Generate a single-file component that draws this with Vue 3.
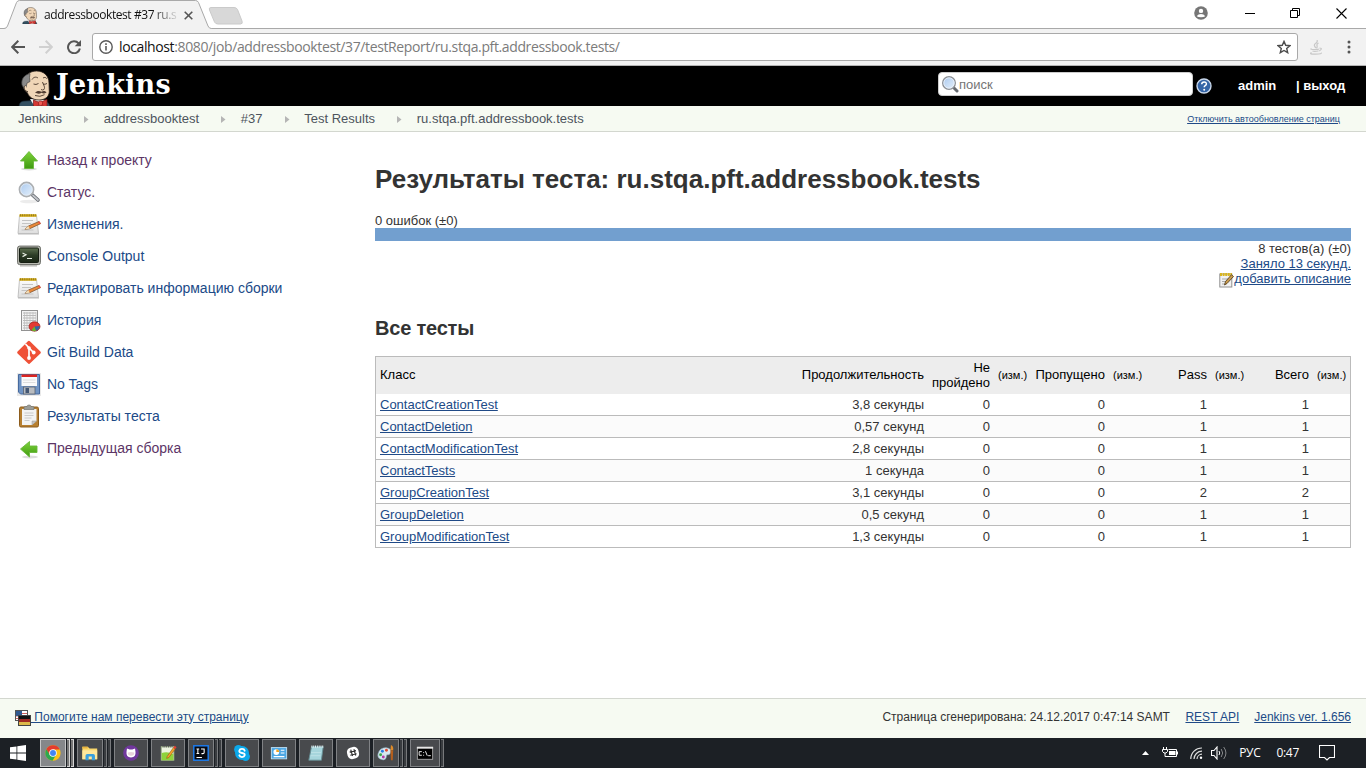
<script setup>
const crumbs = ['Jenkins', 'addressbooktest', '#37', 'Test Results', 'ru.stqa.pft.addressbook.tests']

const tasks = [
  { icon: 'up', label: 'Назад к проекту', visited: true },
  { icon: 'search', label: 'Статус.', visited: true },
  { icon: 'notepad', label: 'Изменения.' },
  { icon: 'terminal', label: 'Console Output' },
  { icon: 'notepad', label: 'Редактировать информацию сборки' },
  { icon: 'graph', label: 'История' },
  { icon: 'git', label: 'Git Build Data' },
  { icon: 'save', label: 'No Tags' },
  { icon: 'clipboard', label: 'Результаты теста' },
  { icon: 'previous', label: 'Предыдущая сборка', visited: true }
]

const rows = [
  { name: 'ContactCreationTest', time: '3,8 секунды', fail: 0, skip: 0, pass: 1, total: 1 },
  { name: 'ContactDeletion', time: '0,57 секунд', fail: 0, skip: 0, pass: 1, total: 1 },
  { name: 'ContactModificationTest', time: '2,8 секунды', fail: 0, skip: 0, pass: 1, total: 1 },
  { name: 'ContactTests', time: '1 секунда', fail: 0, skip: 0, pass: 1, total: 1 },
  { name: 'GroupCreationTest', time: '3,1 секунды', fail: 0, skip: 0, pass: 2, total: 2 },
  { name: 'GroupDeletion', time: '0,5 секунд', fail: 0, skip: 0, pass: 1, total: 1 },
  { name: 'GroupModificationTest', time: '1,3 секунды', fail: 0, skip: 0, pass: 1, total: 1 }
]

const apps = [
  { icon: 'chrome', stack: 2, active: true },
  { icon: 'explorer', stack: 2 },
  { icon: 'github', stack: 0 },
  { icon: 'npp', stack: 0 },
  { icon: 'idea', stack: 2 },
  { icon: 'skype', stack: 0 },
  { icon: 'panel', stack: 0 },
  { icon: 'notes', stack: 0 },
  { icon: 'slack', stack: 0 },
  { icon: 'paint', stack: 2 },
  { icon: 'cmd', stack: 1 }
]
</script>

<template>
  <div class="screen">
    <svg class="defs" width="0" height="0" aria-hidden="true">
      <defs>
        <linearGradient id="green" x1="0" y1="0" x2="0" y2="1">
          <stop offset="0" stop-color="#7ed33a" /><stop offset="1" stop-color="#3f9a12" />
        </linearGradient>
        <linearGradient id="lens" x1="0" y1="0" x2="1" y2="1">
          <stop offset="0" stop-color="#a9c8ee" /><stop offset="1" stop-color="#e6f1fc" />
        </linearGradient>
        <linearGradient id="paper" x1="0" y1="0" x2="0" y2="1">
          <stop offset="0" stop-color="#fdfdfd" /><stop offset="1" stop-color="#dedede" />
        </linearGradient>
        <linearGradient id="crt" x1="0" y1="0" x2="0" y2="1">
          <stop offset="0" stop-color="#5d7050" /><stop offset="0.5" stop-color="#2c3c26" /><stop offset="1" stop-color="#1a2616" />
        </linearGradient>
      </defs>
      <symbol id="i-butler" viewBox="0 0 34 37">
        <path d="M1 37c0-4 2-6 6-6l16-1c5 0 8 2 9 7z" fill="#335061" stroke="#16242c" stroke-width=".7" />
        <path d="M12 29l5 8h8l4-7z" fill="#f4f4f4" />
        <path d="M7 11C7 5 12 1 18.500 1 26 1 31 6 31 13l.3 9c-.5 5-4.500 8-10.300 8-6 0-10-3-11.500-7L7 20.500C5 18 5.500 14 7 11z" fill="#f0d6b7" stroke="#2a201a" stroke-width=".8" />
        <path d="M12 3.500C6 5 3 9 4 15l2.500 4.500 1.500-2 1-4.500 3-1.500-.5-4z" fill="#898989" stroke="#444" stroke-width=".7" />
        <path d="M7.500 15.500c-2 .5-1.700 4 .5 5.500l2 .8" fill="#f0d6b7" stroke="#3a2b20" stroke-width=".9" />
        <path d="M14 9.500c1.500-2.500 4-3 6-1.500M25 8c1.500-1 3-.7 4 .8M15.500 14q2.500 1.200 5-.5M25 14q2 .8 4-.5M24.500 12c.8 3 3 5 1.500 7.500q-1.500 1-3 0M17 25.500q5 2 9.500-.8" fill="none" stroke="#4a382b" stroke-width=".9" />
        <path d="M17 22.500c2-2 4.500-2 6.500-.7 2-1.300 4-.8 5 .7-1.700 1.300-3.500 1.300-5 .3-2 1.300-4.500 1-6.500-.3z" fill="#513d31" />
        <path d="M15.500 30l6 2.500 7.500-3v8l-7-2.500-6.500 2.500z" fill="#d33833" stroke="#7e1512" stroke-width=".7" />
        <rect x="20.500" y="31" width="4" height="4.500" rx="1.500" fill="#ef5b52" stroke="#8a1814" stroke-width=".6" />
      </symbol>
      <symbol id="i-up" viewBox="0 0 24 24">
        <ellipse cx="12" cy="21" rx="8" ry="1.500" fill="#ddd" />
        <path d="M12 3.500l8.500 9.500h-4v7.500h-9V13h-4z" fill="url(#green)" stroke="#69b83a" stroke-width=".9" />
      </symbol>
      <symbol id="i-search" viewBox="0 0 24 24">
        <ellipse cx="12" cy="21.500" rx="9" ry="1.700" fill="#ececec" />
        <path d="M15.500 15l5.500 5" stroke="#666a70" stroke-width="3.600" stroke-linecap="round" />
        <path d="M16 15.500l5 4.500" stroke="#c3c6cb" stroke-width="1.800" stroke-linecap="round" />
        <circle cx="9.500" cy="9.500" r="7" fill="url(#lens)" stroke="#acafb2" stroke-width="1.800" />
        <circle cx="9.500" cy="9.500" r="5.800" fill="none" stroke="#e9f0f8" stroke-width=".8" />
      </symbol>
      <symbol id="i-notepad" viewBox="0 0 24 24">
        <path d="M2.500 3.500h17l2 18h-20.500z" fill="url(#paper)" stroke="#b5b5b5" stroke-width=".8" />
        <path d="M2.500 3.500h17" stroke="#d2aa15" stroke-width="2.600" />
        <path d="M3 3.200h16" stroke="#8c7420" stroke-width="2" stroke-dasharray=".8 1.400" />
        <path d="M5 8.500h11M5 11.500h9M4.500 14.500h6M4.500 18h12" stroke="#c4c4c4" stroke-width="1" />
        <path d="M8 17.300l3.300-3.300L22 9.500l1.500 2.200-10.700 5z" fill="#e9883a" stroke="#744d2a" stroke-width=".7" />
        <path d="M8 17.300l3.300-3.300 1.500 2.700z" fill="#f2dfb9" />
        <path d="M21 9.900l1.500-.7 1.300 2.300-1.300.8z" fill="#ea5245" />
        <path d="M1 22h21" stroke="#bbb" stroke-width="1" />
      </symbol>
      <symbol id="i-terminal" viewBox="0 0 24 24">
        <rect x=".6" y="2.100" width="22.800" height="18.500" rx="2" fill="#b9bbb2" stroke="#696b65" />
        <rect x="2.500" y="4" width="19" height="14.500" rx="1" fill="url(#crt)" stroke="#151d12" />
        <path d="M5.500 9l3.500 1.800-3.500 1.800M10 14.500h5" fill="none" stroke="#e8eee3" stroke-width="1.200" />
        <path d="M3 21.800h17" stroke="#bdbdb9" stroke-width="1.500" />
      </symbol>
      <symbol id="i-graph" viewBox="0 0 24 24">
        <rect x="4.500" y="2.500" width="16" height="20" fill="#f4f4f4" stroke="#929292" />
        <path d="M6 5h13M6 7.500h13M6 10h13M6 12.500h13M6 15h13M6 17.500h11M6 20h8" stroke="#aaa" stroke-width=".8" />
        <path d="M7.500 4v18M10 4v18M13 4v18M16 4v18M19 4v18" stroke="#bbb" stroke-width=".7" />
        <ellipse cx="17.500" cy="18.500" rx="5.500" ry="4.700" fill="#e43b32" stroke="#921d1a" stroke-width=".7" />
        <path d="M17.500 18.500l5.300-.5c0 2.500-1.800 4.200-4 4.800z" fill="#3465a4" />
        <path d="M17.500 18.500l1.500 4.500c-2 .4-3.700-.2-4.500-1z" fill="#69b52f" />
      </symbol>
      <symbol id="i-git" viewBox="0 0 24 24">
        <path d="M10.900 1.300L.6 11.600a1.300 1.300 0 0 0 0 1.800l10.500 10.200a1.300 1.300 0 0 0 1.800 0l10.500-10.200a1.300 1.300 0 0 0 0-1.800L12.900 1.300a1.300 1.300 0 0 0-2 0z" fill="#ef5137" />
        <path d="M8.500 4l3.500 3.800v10.200M12.300 8.200l4.200 4.300" fill="none" stroke="#fff" stroke-width="1.700" />
        <circle cx="12" cy="8" r="1.800" fill="#fff" /><circle cx="12" cy="18" r="1.900" fill="#fff" /><circle cx="16.700" cy="12.500" r="1.900" fill="#fff" />
      </symbol>
      <symbol id="i-save" viewBox="0 0 24 24">
        <rect x="0" y="1" width="24" height="23" fill="#e9e9e9" />
        <path d="M1.500 2.500h21v19.500H3.500l-2-2z" fill="#7094c4" stroke="#466a9f" />
        <rect x="4.500" y="3" width="15.500" height="11" fill="#fafafa" />
        <rect x="4.500" y="2.500" width="15.500" height="2.500" fill="#db2521" />
        <path d="M6 8h12.500M6 10.500h12.500" stroke="#dedede" />
        <rect x="6.500" y="15" width="11.500" height="7" fill="#b9bcc0" stroke="#596270" stroke-width=".8" />
        <rect x="8.500" y="16" width="3.500" height="5" fill="#435774" />
      </symbol>
      <symbol id="i-clipboard" viewBox="0 0 24 24">
        <rect x="2.500" y="3" width="19" height="20" rx="1.500" fill="#b77f30" stroke="#8d5c1c" />
        <path d="M5 5h14.500v12l-4.500 4h-10z" fill="#f3f3f3" />
        <path d="M19.500 17l-4.500 4v-4z" fill="#c4c4c4" stroke="#999" stroke-width=".5" />
        <path d="M7.500 9h9M7.500 11.500h9M7.500 14h7M7.500 16.500h5" stroke="#cacaca" />
        <path d="M7 5.500v-2q0-1 1.500-1h1.500q0-1.500 2-1.500t2 1.500h1.500q1.500 0 1.500 1v2z" fill="#9b9d98" stroke="#72746f" stroke-width=".7" />
      </symbol>
      <symbol id="i-previous" viewBox="0 0 24 24">
        <ellipse cx="13" cy="21" rx="8" ry="1.500" fill="#ddd" />
        <path d="M3.500 13l9-7.500V10h7.500v6.500h-7.500v4.500z" fill="url(#green)" stroke="#69b83a" stroke-width=".9" />
      </symbol>

      <symbol id="i-chrome" viewBox="0 0 20 20">
        <circle cx="10" cy="10" r="8.500" fill="#fbc116" />
        <path d="M2.600 5.800A8.500 8.500 0 0 1 17.500 6H10L6 12z" fill="#e33b2e" />
        <path d="M2.600 5.800A8.500 8.500 0 0 0 9.500 18.500l4-6.500-7 0z" fill="#2da94f" />
        <circle cx="10" cy="10" r="4.200" fill="#fff" /><circle cx="10" cy="10" r="3.300" fill="#4285f4" />
      </symbol>
      <symbol id="i-explorer" viewBox="0 0 20 20">
        <path d="M1.500 3h6l2 2h8.500v12H1.500z" fill="#f9d86d" /><path d="M1.500 3h6v2h-6z" fill="#e7b33d" />
        <path d="M1.500 7H18v10H1.500z" fill="#ffe79b" />
        <path d="M5 18v-5q0-2 2-2h6.500q2 0 2 2v5H12v-4H8.500v4H5z" fill="#3aa0de" />
      </symbol>
      <symbol id="i-github" viewBox="0 0 20 20">
        <circle cx="10" cy="10" r="8.700" fill="#70379d" />
        <path d="M5.500 5l3 1.200h3L14.500 5l.5 4q.7 6-5 6t-5-6z" fill="#fff" /><path d="M6.500 9.500q3.500-1 7 0 .7 3.500-3.500 3.500t-3.500-3.500z" fill="#e8d3dd" />
      </symbol>
      <symbol id="i-npp" viewBox="0 0 20 20">
        <rect x="2.500" y="3" width="14" height="15" fill="#ecf3df" stroke="#9db387" />
        <path d="M3 10q6-2 13 1v7H3z" fill="#8fd33b" /><path d="M4 3h11" stroke="#555" stroke-width="2" stroke-dasharray="1 1" />
        <path d="M9 14L16 4l2 1.500-7 9.500-2.500 1z" fill="#f7a62a" stroke="#8a4c15" stroke-width=".6" /><path d="M16 4l1.500-2 2 1.500-1.500 2z" fill="#e43e35" />
      </symbol>
      <symbol id="i-idea" viewBox="0 0 20 20">
        <rect x="2" y="2" width="16" height="16" fill="#080a10" stroke="#1d7df0" stroke-width="1.600" />
        <path d="M5 5.500h3M6.500 5.500v5M5 10.500h3M10 5.500h3.500v4q0 1.200-1.500 1.200h-1.500M5 15h6" fill="none" stroke="#fff" stroke-width="1.200" />
      </symbol>
      <symbol id="i-skype" viewBox="0 0 20 20">
        <circle cx="10" cy="10" r="7.800" fill="#0ca8ea" /><circle cx="6" cy="6" r="4.800" fill="#0ca8ea" /><circle cx="14" cy="14" r="4.800" fill="#0ca8ea" />
        <path d="M13 7.500q-.5-2-3-2t-3 2 3 2.500 3 2.500-3 2-3-2" fill="none" stroke="#fff" stroke-width="2" stroke-linecap="round" />
      </symbol>
      <symbol id="i-panel" viewBox="0 0 20 20">
        <rect x="1.500" y="4" width="17" height="12.500" fill="#4da7e4" stroke="#c1e3f8" />
        <circle cx="7" cy="9" r="3.200" fill="#fff" /><path d="M7 9V5.800A3.200 3.200 0 0 1 10.200 9z" fill="#f4a321" />
        <path d="M12 7h4M12 10h4M4 14h12" stroke="#fff" stroke-width="1.200" />
      </symbol>
      <symbol id="i-notes" viewBox="0 0 20 20">
        <path d="M5 3h13l-2 15H2z" fill="#a6d5dc" stroke="#658d94" /><path d="M5 3h13" stroke="#eef8fa" stroke-width="2.500" stroke-dasharray="1 1" />
        <path d="M4.500 9.500h11M4 13h11" stroke="#bfe2e7" />
      </symbol>
      <symbol id="i-slack" viewBox="0 0 20 20">
        <rect x="3.500" y="3.500" width="13" height="13" rx="5" fill="#fff" transform="rotate(-14 10 10)" />
        <path d="M7.500 6.300l2 7M11 5.800l2 7M6.300 9l7-1.700M7 12.500l7-1.700" stroke="#333" stroke-width="1.300" />
      </symbol>
      <symbol id="i-paint" viewBox="0 0 20 20">
        <path d="M1 11q2-7 9-7 7 1 5 6-1 3-4 2l-1 4q-2 3-6 1-4-2-3-6z" fill="#d7e7ef" stroke="#7496a9" stroke-width=".6" />
        <circle cx="6" cy="8" r="1.600" fill="#2b7de1" /><circle cx="10.500" cy="7" r="1.600" fill="#e14b33" /><circle cx="4" cy="12" r="1.600" fill="#3ca64a" /><circle cx="7" cy="14.500" r="1.600" fill="#b33baa" />
        <path d="M15.500 1q3 1 2.500 6h-3z" fill="#df8b28" /><path d="M15 7h3l-.5 11h-2z" fill="#b55f1d" />
      </symbol>
      <symbol id="i-cmd" viewBox="0 0 20 20">
        <rect x="1.500" y="3.500" width="17" height="13.500" fill="#000" stroke="#a9a9a9" /><path d="M1 4.200h18" stroke="#e6e6e6" stroke-width="2" />
        <path d="M6.500 8.500h-3v4h3M8 9.500h1M8 12.500h1M10.500 8l2 5M13.500 13h3" fill="none" stroke="#fff" stroke-width="1" />
      </symbol>
    </svg>

    <header class="tabstrip">
      <div class="tab">
        <svg class="tabshape" width="246" height="29" viewBox="0 0 246 29">
          <path d="M0 28.500h4q2.500 0 3.500-2.500L16.500 2.500q1-2 3-2h176q2 0 3 2l9.500 23.500q1 2.500 3.500 2.500h35V29H0z" fill="#f2f2f2" stroke="none" />
          <path d="M0 28.500h4q2.500 0 3.500-2.500L16.500 2.500q1-2 3-2h176q2 0 3 2l9.500 23.500q1 2.500 3.500 2.500h35" fill="none" stroke="#a9a9a9" />
          <path d="M211 7.500h23q2.500 0 3.500 2l4.500 11.500q1 3-1.500 3h-22.500q-2.500 0-3.500-2L209.500 10q-1-2.500 1.500-2.500z" fill="#d8d8d8" stroke="#cacaca" />
        </svg>
        <div class="tabbody">
          <svg width="16" height="17"><use href="#i-butler" /></svg>
          <span class="tabtitle">addressbooktest #37 ru.s</span>
          <svg width="9" height="9" viewBox="0 0 9 9"><path d="M.7.700l7.600 7.600M8.300.700L.7 8.300" stroke="#555" stroke-width="1.600" /></svg>
        </div>
      </div>
      <div class="winbtns">
        <svg width="14" height="14" viewBox="0 0 14 14"><circle cx="7" cy="7" r="6.800" fill="#767676" /><circle cx="7" cy="4.900" r="2.200" fill="#fff" /><path d="M2.700 10.300q1.500-2.300 4.300-2.300t4.300 2.300q-1.600 1-4.300 1t-4.300-1z" fill="#fff" /></svg>
        <svg width="10" height="10" viewBox="0 0 10 10"><path d="M0 5.500h10" stroke="#000" /></svg>
        <svg width="10" height="10" viewBox="0 0 10 10"><path d="M.5 2.500h7v7h-7zM2.500 2.500v-2h7v7h-2" fill="none" stroke="#000" /></svg>
        <svg width="11" height="11" viewBox="0 0 11 11"><path d="M.5.500l10 10M10.500.500l-10 10" stroke="#000" stroke-width="1.100" /></svg>
      </div>
    </header>

    <div class="toolbar">
      <svg width="14" height="14" viewBox="0 0 14 14"><path d="M14 7H1.500M7.300.8L1.200 7l6.100 6.200" fill="none" stroke="#555" stroke-width="2" /></svg>
      <svg width="14" height="14" viewBox="0 0 14 14"><path d="M0 7h12.500M6.700.8L12.800 7l-6.100 6.200" fill="none" stroke="#d0d0d0" stroke-width="2" /></svg>
      <svg width="14" height="14" viewBox="0 0 14 14"><path d="M11.600 3.300A6 6 0 1 0 12.900 8.500" fill="none" stroke="#555" stroke-width="2" /><path d="M14 0v6.300H7.700z" fill="#555" /></svg>
      <div class="omnibox">
        <svg width="14" height="14" viewBox="0 0 14 14"><circle cx="7" cy="7" r="6.200" fill="none" stroke="#5a5a5a" stroke-width="1.400" /><path d="M7 6v4.500M7 3.300v1.600" stroke="#5a5a5a" stroke-width="1.600" /></svg>
        <span class="url"><b>localhost</b>:8080/job/addressbooktest/37/testReport/ru.stqa.pft.addressbook.tests/</span>
        <svg class="star" width="14" height="14" viewBox="0 0 14 14"><path d="M7 1.400l1.700 3.900 4.200.4-3.200 2.800 1 4.200L7 10.500l-3.700 2.200 1-4.200L1.100 5.700l4.200-.4z" fill="none" stroke="#4c4c4c" stroke-width="1.400" /></svg>
      </div>
      <svg class="java" width="12" height="15" viewBox="0 0 12 15"><path d="M7 0q1 2-1.500 3.500T6 8M8.500 3q-2 1-1.500 2.500T6.500 8.500M1.500 8.500q-2 1 3 1t4-.8M9.500 8q2.500 0 1.500 1.500T8.500 11M2.500 11q2 .8 5.500 0M1.500 12.500q-3 1.800 4 1.700t5.500-1.500" fill="none" stroke="#c8c8c8" stroke-width="1.200" /></svg>
      <svg width="4" height="14" viewBox="0 0 4 14"><circle cx="2" cy="2" r="1.500" fill="#555" /><circle cx="2" cy="7" r="1.500" fill="#555" /><circle cx="2" cy="12" r="1.500" fill="#555" /></svg>
    </div>

    <div class="jhead">
      <svg class="butler" width="34" height="37"><use href="#i-butler" /></svg>
      <span class="brand">Jenkins</span>
      <div class="searchbox">
        <svg width="18" height="18" viewBox="0 0 18 18"><path d="M12 12l4 4" stroke="#666a70" stroke-width="3" stroke-linecap="round" /><circle cx="8" cy="8" r="6.300" fill="url(#lens)" stroke="#8d9196" stroke-width="1.400" /><circle cx="8" cy="8" r="5.200" fill="none" stroke="#edf3fa" stroke-width=".8" /></svg><span>поиск</span>
      </div>
      <svg class="help" width="16" height="16" viewBox="0 0 16 16"><circle cx="8" cy="8" r="7" fill="#3565a7" stroke="#c9d8ec" stroke-width="1.400" /><path d="M5.700 6.300q.1-2.300 2.400-2.300t2.300 2q0 1-1.200 1.700-1 .6-1 1.600" fill="none" stroke="#fff" stroke-width="1.500" /><circle cx="8.200" cy="11.700" r="1" fill="#fff" /></svg>
      <span class="admin">admin</span>
      <span class="logout">| выход</span>
    </div>

    <nav class="crumbs">
      <template v-for="(c, i) in crumbs" :key="c">
        <svg v-if="i" class="chev" width="5" height="7" viewBox="0 0 5 7"><path d="M0 0l4.500 3.500L0 7z" fill="#b5b5b5" /></svg>
        <span>{{ c }}</span>
      </template>
      <a class="refresh">Отключить автообновление страниц</a>
    </nav>

    <main class="body">
      <aside class="side">
        <div v-for="t in tasks" :key="t.label" class="task" :class="{ visited: t.visited }">
          <svg width="24" height="24"><use :href="'#i-' + t.icon" /></svg>
          <span>{{ t.label }}</span>
        </div>
      </aside>
      <section class="content">
        <h1>Результаты теста: ru.stqa.pft.addressbook.tests</h1>
        <div class="fails">0 ошибок (±0)</div>
        <div class="bar"></div>
        <div class="summary">
          <div>8 тестов(а) (±0)</div>
          <div><a>Заняло 13 секунд.</a></div>
          <div class="desc"><svg width="15" height="16" viewBox="0 0 15 16"><rect x=".8" y="2" width="12" height="13" fill="#f2f2f2" stroke="#909090" /><path d="M1 2.500h12" stroke="#d9b51c" stroke-width="3" stroke-dasharray="2 .6" /><path d="M3 7h7M3 9.500h4M3 12h3" stroke="#aaa" /><path d="M5.500 13l1-3.500L12.500 2.700l2 1.800-6.500 7z" fill="#c99a4b" stroke="#4b3718" stroke-width=".8" /></svg><a>добавить описание</a></div>
        </div>
        <h2>Все тесты</h2>
        <div class="table">
          <div class="row head">
            <span>Класс</span><span>Продолжительность</span><span>Не пройдено</span><small>(изм.)</small><span>Пропущено</span><small>(изм.)</small><span>Pass</span><small>(изм.)</small><span>Всего</span><small>(изм.)</small>
          </div>
          <div v-for="r in rows" :key="r.name" class="row">
            <span><a>{{ r.name }}</a></span><span>{{ r.time }}</span><span>{{ r.fail }}</span><small></small><span>{{ r.skip }}</span><small></small><span>{{ r.pass }}</span><small></small><span>{{ r.total }}</span><small></small>
          </div>
        </div>
      </section>
    </main>

    <footer class="foot">
      <svg width="16" height="16" viewBox="0 0 16 16">
        <rect x=".5" y=".5" width="12" height="10" fill="#fff" stroke="#555" /><path d="M1 3.500h11M1 6h11M1 8.500h11" stroke="#d0615e" stroke-width="1.100" /><rect x="1" y="1" width="6" height="5" fill="#31598f" />
        <rect x="3.500" y="5.500" width="12" height="10" fill="#111" stroke="#444" /><path d="M4 10.500h11" stroke="#a02a23" stroke-width="3" /><path d="M4 13.500h11" stroke="#dcb94a" stroke-width="3" />
      </svg>
      <a class="translate">&nbsp;Помогите нам перевести эту страницу</a>
      <span class="gen">Страница сгенерирована: 24.12.2017 0:47:14 SAMT</span>
      <a class="rest">REST API</a>
      <a class="ver">Jenkins ver. 1.656</a>
    </footer>

    <div class="taskbar">
      <div class="start"><svg width="16" height="16" viewBox="0 0 16 16"><path d="M0 2.300l6.500-.9v6.200H0zM7.300 1.300L16 0v7.600H7.300zM0 8.400h6.500v6.200L0 13.700zM7.300 8.400H16V16l-8.700-1.300z" fill="#fff" /></svg></div>
      <div v-for="a in apps" :key="a.icon" class="slot" :class="{ active: a.active }">
        <div class="app"><svg width="18" height="18"><use :href="'#i-' + a.icon" /></svg></div>
        <i v-for="n in a.stack" :key="n"></i>
      </div>
      <div class="tray">
        <svg width="7" height="4" viewBox="0 0 7 4"><path d="M0 4l3.500-4L7 4z" fill="#fff" /></svg>
        <svg class="batt" width="17" height="12" viewBox="0 0 17 12"><path d="M6.500 2.500h8v7h-9M15.500 4.500v3" fill="none" stroke="#fff" /><rect x="7" y="4" width="6.500" height="4" fill="#fff" /><path d="M1.500 0v2M4.500 0v2M.5 2.500h5v2l-1.500 1.500h-2L.5 4.500zM3 6v3.500h3" fill="none" stroke="#fff" /></svg>
        <svg class="wifi" width="13" height="12" viewBox="0 0 13 12"><path d="M.8 12A11 11 0 0 1 12 1M4 12a8 8 0 0 1 8-7.800M7 12a5 5 0 0 1 5-4.800" fill="none" stroke="#ddd" stroke-width="1.200" /><circle cx="11" cy="10.800" r="1.200" fill="#fff" /></svg>
        <svg class="vol" width="16" height="14" viewBox="0 0 16 14"><path d="M.5 4.500H3l3-3.500v12L3 9.500H.5z" fill="none" stroke="#fff" stroke-width="1.100" /><path d="M8 5q1.500 2 0 4" fill="none" stroke="#fff" /><path d="M10.200 3q3 4 0 8M12.700 1q4.500 6 0 12" fill="none" stroke="#858789" /></svg>
        <span class="lang">РУС</span>
        <span class="clock">0:47</span>
        <svg class="note" width="16" height="16" viewBox="0 0 16 16"><path d="M.5.500h15v12h-5L8 15l-2.500-2.500h-5z" fill="none" stroke="#fff" stroke-width="1.100" /></svg>
      </div>
    </div>
  </div>
</template>

<style>
html, body { margin: 0; overflow: hidden; }
</style>

<style scoped>
* { box-sizing: border-box; }
.screen { width: 1366px; height: 768px; display: flex; flex-direction: column; overflow: hidden; background: #fff; font: 13px/15px "Liberation Sans", Arial, sans-serif; color: #333; white-space: nowrap; }
.defs { position: absolute; }
svg { display: block; flex: none; }
a { color: #204a87; text-decoration: underline; }

.tabstrip { height: 29px; flex: none; display: flex; justify-content: space-between; background: linear-gradient(#a9a9a9, #a9a9a9) 0 28px / 100% 1px no-repeat #fff; }
.tab { display: grid; }
.tabshape, .tabbody { grid-area: 1 / 1; }
.tabbody { display: flex; align-items: center; padding-left: 22px; height: 30px; font: 12px/16px "Open Sans", "Noto Sans", sans-serif; color: #111; }
.tabtitle { width: 134px; margin: 0 6px 0 6px; letter-spacing: -0.42px; -webkit-mask-image: linear-gradient(90deg, #000 108px, transparent 136px); mask-image: linear-gradient(90deg, #000 108px, transparent 136px); }
.winbtns { display: flex; align-items: center; height: 26px; padding-right: 19px; }
.winbtns svg:nth-child(2) { margin-left: 37px; }
.winbtns svg:nth-child(3) { margin-left: 35px; }
.winbtns svg:nth-child(4) { margin-left: 36px; }

.toolbar { height: 37px; flex: none; display: flex; align-items: center; padding: 0 15px 0 11px; background: #f2f2f2; border-bottom: 1px solid #b4b4b4; }
.toolbar > svg:nth-child(2), .toolbar > svg:nth-child(3) { margin-left: 14px; }
.omnibox { margin-left: 11px; width: 1206px; height: 28px; display: flex; align-items: center; background: #fff; border: 1px solid #a9a9a9; border-radius: 3px; padding: 0 6px; }
.url { margin-left: 6px; font: 14px/20px "Open Sans", "Noto Sans", sans-serif; letter-spacing: -0.38px; color: #7b7b7b; }
.url b { font-weight: 400; color: #111; }
.star { margin-left: auto; }
.java { margin-left: 12px; margin-right: 24px; }
.toolbar > svg:last-child { margin-left: auto; }

.jhead { height: 40px; flex: none; display: flex; background: #000; color: #fff; padding-left: 18px; overflow: hidden; }
.butler { margin-top: 4px; }
.brand { width: 116px; margin: 4px 0 0 4px; font: bold 27px/30px "DejaVu Serif", serif; letter-spacing: 0.2px; }
.searchbox { margin: 6px 0 0 766px; width: 255px; height: 24px; border-radius: 4px; background: #fff; border: 1px solid #ccc; display: flex; align-items: center; padding-left: 2px; color: #757575; }
.help { margin: 12px 0 0 3px; }
.admin { font-weight: bold; margin: 12px 0 0 26px; width: 38px; }
.logout { font-weight: bold; margin: 12px 0 0 20px; }

.crumbs { height: 26px; flex: none; display: flex; align-items: center; padding: 0 26px 1px 18px; background: #f6faf2; border-bottom: 1px solid #d3d7cf; color: #4d545d; }
.chev { margin: 2px 14.7px 0 22px; }
.refresh { margin-left: auto; margin-top: 1px; font-size: 9px; line-height: 12px; }

.body { height: 566px; flex: none; display: flex; }
.side { width: 375px; padding: 12px 0 0 17px; font-size: 14px; }
.task { height: 32px; display: flex; align-items: center; gap: 6px; color: #204a87; }
.task span { padding-top: 1px; }
.visited { color: #5c3566; }
.content { width: 976px; }
h1 { margin: 32px 0 0; font-size: 26px; line-height: 30px; }
.fails { margin-top: 19px; }
.bar { height: 13px; background: #729fcf; }
.summary { text-align: right; }
.summary div { height: 15px; margin-top: 0; }
.summary .desc { display: flex; justify-content: flex-end; height: 16px; }
.desc svg { margin-top: 1px; }
h2 { margin: 29px 0 0; font-size: 20px; line-height: 24px; letter-spacing: -0.2px; }
.table { margin-top: 16px; border: 1px solid #bbb; border-bottom: 0; }
.row { display: grid; grid-template-columns: 421px 131px 66px 38px 77px 38px 64px 38px 64px 37px; height: 22px; align-items: center; border-bottom: 1px solid #bbb; }
.row:nth-child(odd) { background: #fbfbfb; }
.row span { text-align: right; padding-right: 4px; }
.row span:first-child { text-align: left; padding-left: 4px; }
.row small { font-size: 11px; padding-left: 4px; }
.row.head { height: 37px; border: 0; padding-bottom: 2px; background: #ededed; color: #000; white-space: normal; }
.row.head small { margin-top: 2px; }

.foot { height: 40px; flex: none; display: flex; align-items: center; padding: 0 15px 3px; background: #f6faf2; border-top: 1px solid #d3d7cf; font-size: 12px; }
.foot svg { margin-top: 2px; }
.gen { margin-left: auto; }
.rest { margin-left: 15.500px; }
.ver { margin-left: 15px; }

.taskbar { height: 30px; flex: none; display: flex; align-items: center; background: #1c2025; }
.start { width: 40px; padding-left: 10px; }
.slot { width: 34px; height: 28px; margin-right: 3px; display: flex; gap: 1px; }
.app { flex: 1; display: flex; align-items: center; justify-content: center; background: #484a4d; border: 1px solid #808285; }
.slot i { width: 3px; background: #393c40; border: 1px solid #77797c; border-left: 0; }
.active .app { background: #85878a; border-color: #c5c6c7; }
.active i { background: #777; border-color: #d5d5d5; }
.tray { margin-left: auto; display: flex; align-items: center; color: #fff; font: 12px/16px "Open Sans", "Noto Sans", sans-serif; letter-spacing: -0.3px; padding-right: 31px; }
.batt { margin-left: 13px; }
.wifi { margin-left: 11px; }
.vol { margin-left: 8px; }
.lang { margin-left: 12px; }
.clock { margin-left: 16px; }
.note { margin-left: 20px; }
</style>
